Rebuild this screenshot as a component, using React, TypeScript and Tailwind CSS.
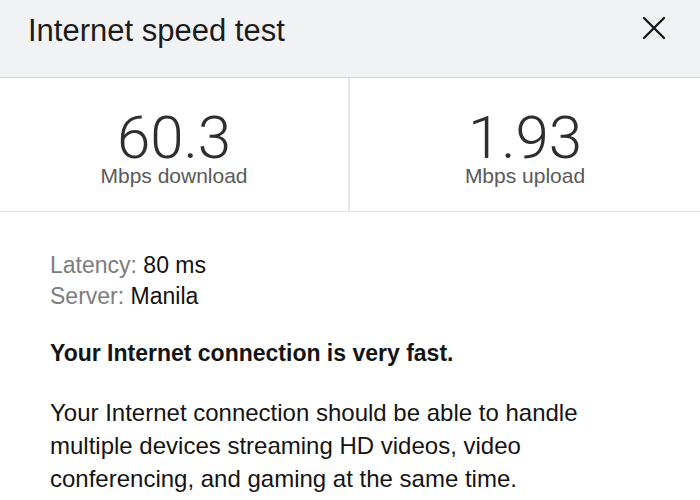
const sans = { fontFamily: '"Liberation Sans", Arial, sans-serif' }

function Stat({ value, label, divider }: { value: string; label: string; divider?: boolean }) {
  return (
    <div className={`flex flex-col items-center pt-[32px] ${divider ? 'border-r-2 border-[#e6e6e6]' : ''}`}>
      <div className="font-['Roboto',sans-serif] font-light text-[60px] leading-[56px] text-[#2e2e2e]">
        {value}
      </div>
      <div className="text-[21px] leading-[20px] text-[#5a5a5a]">{label}</div>
    </div>
  )
}

export default function App() {
  return (
    <div className="w-[700px] h-[500px] bg-white overflow-hidden font-['Liberation_Sans',Arial,sans-serif]" style={sans}>
      {/* Header */}
      <div className="h-[78px] bg-[#f1f2f4] border-b border-[#cfcfcf] flex items-start justify-between pl-[28px] pr-[34px]">
        <h1 className="pt-[13px] text-[31px] leading-[35px] text-[#1c1c1c]">Internet speed test</h1>
        <button className="mt-[16px] w-[24px] h-[24px]">
          <svg width="24" height="24" viewBox="0 0 24 24" fill="none">
            <line x1="2" y1="2" x2="22" y2="22" stroke="#1a1a1a" strokeWidth="2.4" strokeLinecap="round" />
            <line x1="22" y1="2" x2="2" y2="22" stroke="#1a1a1a" strokeWidth="2.4" strokeLinecap="round" />
          </svg>
        </button>
      </div>

      {/* Speeds */}
      <div className="h-[134px] grid grid-cols-2 border-b border-[#e4e4e4]">
        <Stat value="60.3" label="Mbps download" divider />
        <Stat value="1.93" label="Mbps upload" />
      </div>

      {/* Details */}
      <div className="px-[50px] pt-[38px]">
        <div className="text-[23px] leading-[31px]">
          <p>
            <span className="text-[#7d7d7d]">Latency:</span> <span className="text-[#111]">80 ms</span>
          </p>
          <p>
            <span className="text-[#7d7d7d]">Server:</span> <span className="text-[#111]">Manila</span>
          </p>
        </div>
        <p className="mt-[25px] text-[23px] leading-[33px] font-bold text-[#141414]">
          Your Internet connection is very fast.
        </p>
        <p className="mt-[26px] text-[24px] leading-[33px] text-[#141414]">
          Your Internet connection should be able to handle multiple devices streaming HD videos, video
          conferencing, and gaming at the same time.
        </p>
      </div>
    </div>
  )
}
